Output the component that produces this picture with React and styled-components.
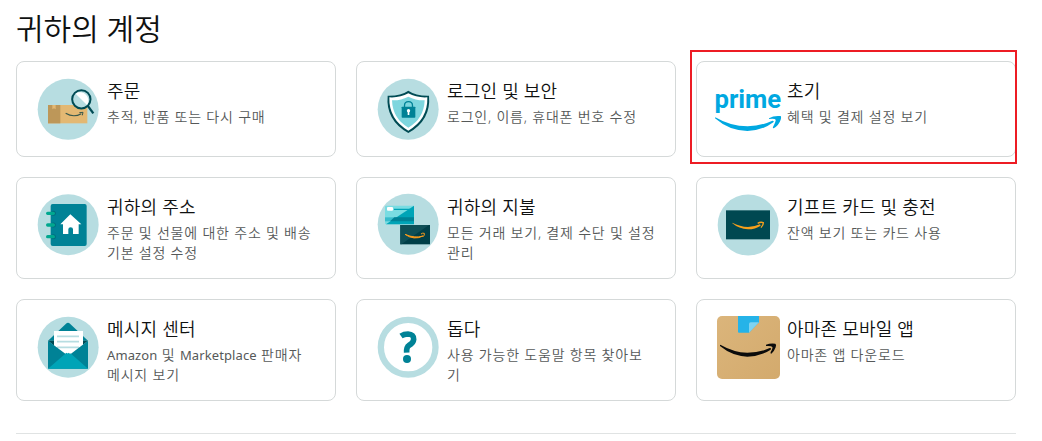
import React from 'react';
import styled, { createGlobalStyle } from 'styled-components';

const GlobalStyle = createGlobalStyle`
  * {
    box-sizing: border-box;
  }

  body {
    margin: 0;
    background: #fff;
    color: #0f1111;
    font-family: "Noto Sans", "Noto Sans CJK KR", sans-serif;
  }
`

const OrdersIcon = () => (
  <IconStyled viewBox="18 21 192 192">
    <circle cx="114.5" cy="118" r="91.5" fill="#b7dde1" />
    <rect x="54" y="105" width="118" height="55" fill="#e3b873" />
    <rect x="54" y="105" width="37" height="55" fill="#bd9759" />
    <path d="M67 105h10v13l-5-3-5 3z" fill="#e3b873" />
    <path d="M107 130q24 14 47 1" fill="none" stroke="#37584d" strokeWidth="3.500" />
    <path d="M148 128l11-1-2 9" fill="none" stroke="#37584d" strokeWidth="3" />
    <path d="M173 107l17 23" stroke="#004b54" strokeWidth="7" />
    <circle cx="154" cy="88" r="27.5" fill="#b7dde1" stroke="#004b54" strokeWidth="6" />
    <path d="M137 71A24.5 24.5 0 0 1 171 105z" fill="#fff" />
  </IconStyled>
)

const SecurityIcon = () => (
  <IconStyled viewBox="18 21 192 192">
    <circle cx="114.5" cy="118" r="91.5" fill="#b7dde1" />
    <path d="M115 62Q138 78 177 77Q184 150 115 189Q46 150 53 77Q92 78 115 62z" fill="#004b54" />
    <path d="M115 70Q140 84 172 82Q174 148 115 182Q56 148 58 82Q90 84 115 70z" fill="#fff" />
    <path d="M115 80Q138 92 164 91Q162 146 115 173Q68 146 66 91Q92 92 115 80z" fill="#7ed6de" />
    <path d="M104 111v-4q0-12 12-12t12 12v4" transform="translate(-.5)" fill="none" stroke="#008296" strokeWidth="4" />
    <rect x="95" y="110" width="41" height="33" rx="2" fill="#008296" />
    <circle cx="115.500" cy="122" r="5" fill="#fff" />
    <path d="M113 123h5v12h-5z" fill="#fff" />
  </IconStyled>
)

const PrimeIcon = () => (
  <IconStyled viewBox="33 6 192 192">
    <PrimeTextStyled x="28.5" y="98">prime</PrimeTextStyled>
    <path d="M31 127Q76 154 128 154Q168 153 202 137Q207 137 206 141Q172 167 127 168Q72 167 30 130z" fill="#00a8e1" />
    <path d="M192 130Q206 121 226 123Q230 124 227 134Q222 150 206 160Q202 160 204 156Q213 138 212 134Q210 130 192 132z" fill="#00a8e1" />
  </IconStyled>
)

const AddressIcon = () => (
  <IconStyled viewBox="18 24 192 192">
    <circle cx="114.5" cy="119" r="91.500" fill="#b7dde1" />
    <rect x="62" y="57" width="108" height="126" rx="6" fill="#008296" />
    {[85, 120, 155].map(y => (
      <g key={y}>
        <circle cx="70" cy={y} r="7.500" fill="#006d7d" />
        <rect x="48" y={y - 5} width="27" height="10" rx="5" fill="#00a88f" />
      </g>
    ))}
    <path d="M121 88L154 118h-8v29h-17v-14q0-6-7-6t-7 6v14h-16v-29h-8z" fill="#fff" />
  </IconStyled>
)

const PaymentsIcon = () => (
  <IconStyled viewBox="18 24 192 192">
    <circle cx="114.5" cy="118" r="91.5" fill="#b7dde1" />
    <rect x="45" y="62" width="87" height="56" rx="3" fill="#79dce2" />
    <path d="M45 97h87v12H45z" fill="#38bccb" />
    <path d="M132 62v56H48z" fill="#00a4b7" />
    <path d="M73 97h59v12H60z" fill="#008296" />
    <path d="M72 71h50l-5 4H72z" fill="#00a4b7" />
    <rect x="51" y="66" width="18" height="11" rx="3" fill="#fff" />
    <rect x="91" y="120" width="89" height="58" fill="#003f48" />
    <path d="M91 120h86L94 178h-3z" fill="#0f4f57" />
    <path d="M105 148Q132 167 159 153Q134 161 105 148z" fill="#f79a1c" stroke="#f79a1c" strokeWidth="3" />
    <path d="M153 147q5-4 10-2q1 5-3 10" fill="none" stroke="#f79a1c" strokeWidth="3" />
  </IconStyled>
)

const GiftCardIcon = () => (
  <IconStyled viewBox="18 24 192 192">
    <circle cx="114.5" cy="120" r="91.5" fill="#b7dde1" />
    <rect x="48" y="76" width="132" height="87" fill="#004851" />
    <path d="M67 113Q90 125 114 126Q136 125 150 118L152 122Q136 133 114 133Q87 132 67 115z" fill="#f7a01c" />
    <path d="M143 115q9-5 17-2q0 7-7 15" fill="none" stroke="#f7a01c" strokeWidth="4" />
  </IconStyled>
)

const MessageIcon = () => (
  <IconStyled viewBox="18 24 192 192">
    <circle cx="114.5" cy="120.500" r="91.5" fill="#b7dde1" />
    <path d="M54 101L108 50q6-5 12 0L174 101z" fill="#008296" />
    <path d="M54 101h120l-60 48z" fill="#004b54" />
    <path d="M72 72h87v60l-44 20-43-20z" fill="#fff" />
    <path d="M81 88h66M81 104h66M81 121h66" stroke="#b7dde1" strokeWidth="5" />
    <path d="M54 101l52 39h17l51-39v84H54z" fill="#008296" />
    <path d="M54 185l52-45 4-3 3 3 3-3 3 3 4 0 51 45z" fill="#00a4b7" />
  </IconStyled>
)

const HelpIcon = () => (
  <IconStyled viewBox="18 24 192 192">
    <circle cx="114.5" cy="120.500" r="82" fill="#fff" stroke="#b7dde1" strokeWidth="19" />
    <path d="M93 87Q102 81 114 81Q132 82 131 97Q130 109 117 115Q109 120 110 137" fill="none" stroke="#008296" strokeWidth="17" />
    <circle cx="111" cy="156" r="12" fill="#008296" />
  </IconStyled>
)

const AppIcon = () => (
  <IconStyled viewBox="24 24 192 192">
    <defs>
      <linearGradient id="cardboard" x1="0" y1="0" x2="1" y2="1">
        <stop offset="0" stopColor="#dbb57b" />
        <stop offset="1" stopColor="#d3aa6d" />
      </linearGradient>
    </defs>
    <rect x="27" y="27" width="189" height="189" rx="15" fill="url(#cardboard)" />
    <path d="M90 27h63v19L123 77H93q-3 0-3-3z" fill="#25b3e8" />
    <path d="M153 46L123 77V51q0-5 5-5z" fill="#7fd3f0" />
    <path d="M37 113Q77 136 118 137Q157 137 185 123Q191 122 188 128Q158 148 118 149Q72 147 37 118Q35 115 37 113z" fill="#0b0b0b" />
    <path d="M174 113Q187 108 202 110Q206 112 203 121Q199 133 190 140Q186 140 188 135Q195 123 193 120Q191 116 174 117z" fill="#0b0b0b" />
  </IconStyled>
)

const cards = [
  { icon: OrdersIcon, title: '주문', lines: ['추적, 반품 또는 다시 구매'] },
  { icon: SecurityIcon, title: '로그인 및 보안', lines: ['로그인, 이름, 휴대폰 번호 수정'] },
  { icon: PrimeIcon, title: '초기', lines: ['혜택 및 결제 설정 보기'], marked: true },
  { icon: AddressIcon, title: '귀하의 주소', lines: ['주문 및 선물에 대한 주소 및 배송', '기본 설정 수정'] },
  { icon: PaymentsIcon, title: '귀하의 지불', lines: ['모든 거래 보기, 결제 수단 및 설정', '관리'] },
  { icon: GiftCardIcon, title: '기프트 카드 및 충전', lines: ['잔액 보기 또는 카드 사용'] },
  { icon: MessageIcon, title: '메시지 센터', lines: ['Amazon 및 Marketplace 판매자', '메시지 보기'] },
  { icon: HelpIcon, title: '돕다', lines: ['사용 가능한 도움말 항목 찾아보', '기'] },
  { icon: AppIcon, title: '아마존 모바일 앱', lines: ['아마존 앱 다운로드'] },
]

// latin words are set smaller and a bit heavier than the hangul around them
const renderLine = line => line.split(/([A-Za-z]+)/).map((part, i) => (
  /[A-Za-z]/.test(part) ? <LatinStyled key={i}>{part}</LatinStyled> : part
))

function Card(props){
  const { icon: Icon, title, lines, marked } = props.card
  return (
    <CardStyled>
      <Icon />
      <CardTextStyled>
        <CardTitleStyled>{title}</CardTitleStyled>
        {lines.map(line => <CardLineStyled key={line}>{renderLine(line)}</CardLineStyled>)}
      </CardTextStyled>
      {marked && <MarkStyled />}
    </CardStyled>
  )
}

export default function App(){
  return (
    <PageStyled>
      <GlobalStyle />
      <HeadingStyled>귀하의 계정</HeadingStyled>
      <GridStyled>
        {cards.map(card => <Card key={card.title} card={card} />)}
      </GridStyled>
      <DividerStyled />
    </PageStyled>
  )
}

const PageStyled = styled.main`
  width: 1042px;
  height: 441px;
  padding: 9px 26px 0 16px;
  overflow: hidden;
`

const HeadingStyled = styled.h1`
  margin: 0 0 12px;
  height: 40px;
  line-height: 40px;
  font-size: 30px;
  font-weight: 350;
`

const GridStyled = styled.div`
  display: grid;
  grid-template-columns: repeat(3, 320px);
  grid-template-rows: 96px 102px 102px;
  gap: 20px;
`

const CardStyled = styled.div`
  position: relative;
  display: flex;
  align-items: flex-start;
  gap: 7px;
  padding: 15px 0 0 19px;
  border: 1px solid #d5d9d9;
  border-radius: 8px;
`

const IconStyled = styled.svg`
  flex: none;
  width: 64px;
  height: 64px;
  overflow: visible;
`

const PrimeTextStyled = styled.text`
  font-family: Roboto, "Open Sans", sans-serif;
  font-size: 77px;
  font-weight: 700;
  fill: #00a8e1;
`

const CardTextStyled = styled.div`
  white-space: nowrap;
`

const CardTitleStyled = styled.h2`
  margin: 2px 0 4px;
  height: 24px;
  line-height: 24px;
  font-size: 18px;
  font-weight: 350;
  letter-spacing: 0.2px;
`

const CardLineStyled = styled.p`
  margin: 0;
  height: 20px;
  line-height: 20px;
  font-size: 14px;
  font-weight: 350;
  letter-spacing: 0.8px;
  color: #565959;
`

const LatinStyled = styled.span`
  font-size: 13px;
  font-weight: 400;
  letter-spacing: 0.1px;
`

// hand drawn frame around one card
const MarkStyled = styled.div`
  position: absolute;
  top: -12px;
  left: -7px;
  width: 327px;
  height: 114px;
  border: 2px solid #ed1c24;
`

const DividerStyled = styled.hr`
  margin: 32px 0 0;
  border: 0;
  border-top: 1px solid #e0e3e3;
`
